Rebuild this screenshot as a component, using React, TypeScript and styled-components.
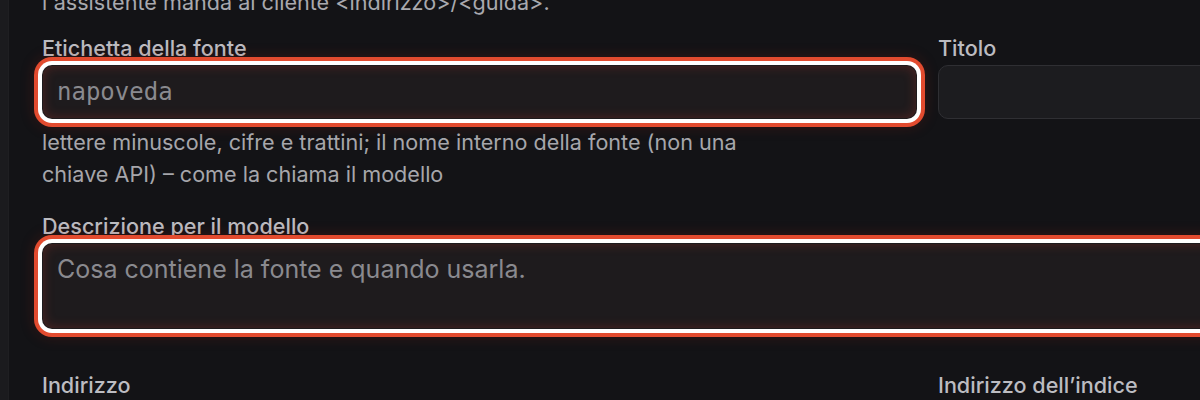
import React from 'react';
import styled, { createGlobalStyle, css } from 'styled-components';

const GlobalStyle = createGlobalStyle`
    html, body {
        margin: 0;
        padding: 0;
        background: #131316;
        overflow: hidden;
    }
    body {
        font-family: Inter, "Noto Sans", sans-serif;
        -webkit-font-smoothing: antialiased;
    }
`;

const focusRing = css`
    border-color: transparent;
    background: #1e1b1d;
    box-shadow:
        inset 0 0 12px rgba(210, 60, 45, 0.28),
        0 0 0 4px #ffffff,
        0 0 0 8px #e24b2f,
        0 0 14px 8px rgba(150, 30, 20, 0.25);
`;

export default function App() {
    return (
        <>
            <GlobalStyle />
            <Shell>
                <Rail />
                <Main>
                    <Intro>l'assistente manda al cliente &lt;indirizzo&gt;/&lt;guida&gt;.</Intro>
                    <FormGrid>
                        <Field>
                            <Label>Etichetta della fonte</Label>
                            <TextInput $mono $focused placeholder="napoveda" />
                            <Help>
                                lettere minuscole, cifre e trattini; il nome interno della fonte (non una
                                <br />
                                chiave API) – come la chiama il modello
                            </Help>
                        </Field>
                        <Field>
                            <Label>Titolo</Label>
                            <TextInput />
                        </Field>
                        <Field $wide>
                            <Label>Descrizione per il modello</Label>
                            <TextArea $focused placeholder="Cosa contiene la fonte e quando usarla." />
                        </Field>
                        <Field $spaced>
                            <Label>Indirizzo</Label>
                            <TextInput />
                        </Field>
                        <Field $spaced>
                            <Label>Indirizzo dell’indice</Label>
                            <TextInput />
                        </Field>
                    </FormGrid>
                </Main>
            </Shell>
        </>
    );
}

const Shell = styled.div`
    display: flex;
    height: 400px;
    overflow: hidden;
`;

const Rail = styled.div`
    flex: 0 0 8px;
    background: #1b1b1e;
    border-right: 1px solid #1f1f22;
`;

const Main = styled.div`
    flex: 1;
    padding-left: 33px;
    min-width: 0;
`;

const Intro = styled.p`
    margin: -14px 0 18px;
    font-size: 21.6px;
    line-height: 32px;
    color: #a9a9ae;
`;

const FormGrid = styled.div`
    display: grid;
    grid-template-columns: 875px 875px;
    column-gap: 21px;
    row-gap: 24px;
`;

const Field = styled.div<{ $wide?: boolean; $spaced?: boolean }>`
    display: flex;
    flex-direction: column;
    grid-column: ${(p) => (p.$wide ? '1 / -1' : 'auto')};
    margin-top: ${(p) => (p.$spaced ? '20px' : '0')};
`;

const Label = styled.label`
    font-size: 21.6px;
    line-height: 24px;
    font-weight: 500;
    color: #bcbcc1;
    margin-bottom: 5px;
`;

const Help = styled.p`
    margin: 7px 0 0;
    font-size: 21.6px;
    line-height: 32px;
    color: #a6a6ab;
`;

const baseInput = css<{ $focused?: boolean }>`
    box-sizing: border-box;
    width: 100%;
    border: 1px solid #2f2f33;
    border-radius: 10px;
    background: #1c1c1f;
    color: #e6e6e9;
    outline: none;
    padding: 0 14px;
    font-family: Inter, "Noto Sans", sans-serif;
    font-size: 25px;
    &::placeholder {
        color: #8a8a8f;
    }
    ${(p) => p.$focused && focusRing}
`;

const TextInput = styled.input<{ $mono?: boolean; $focused?: boolean }>`
    ${baseInput}
    height: 54px;
    ${(p) =>
        p.$mono &&
        css`
            font-family: "DejaVu Sans Mono", "Liberation Mono", monospace;
            font-size: 24px;
        `}
`;

const TextArea = styled.textarea<{ $focused?: boolean }>`
    ${baseInput}
    height: 86px;
    padding-top: 9px;
    line-height: 32px;
    resize: none;
`;
